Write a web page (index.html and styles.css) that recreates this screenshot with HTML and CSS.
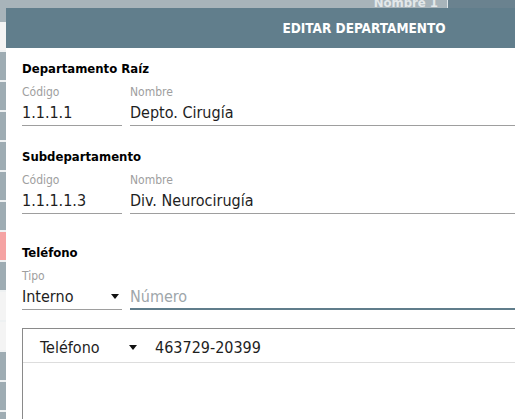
FILE: index.html
```html
<!DOCTYPE html>
<html lang="es">
<head>
<meta charset="utf-8">
<title>Editar departamento</title>
<link rel="stylesheet" href="styles.css">
</head>
<body>
<div class="page">
  <div class="grid-head">
    <div class="th th-main"><span>Nombre 1</span></div>
    <div class="th th-active"></div>
  </div>
  <div class="grid-body">
    <div class="gr gr-light"></div>
    <div class="gr"></div>
    <div class="gr"></div>
    <div class="gr"></div>
    <div class="gr"></div>
    <div class="gr"></div>
    <div class="gr"></div>
    <div class="gr gr-pink"></div>
    <div class="gr"></div>
    <div class="gr gr-light"></div>
    <div class="gr gr-light"></div>
    <div class="gr"></div>
    <div class="gr"></div>
    <div class="gr"></div>
  </div>
</div>

<div class="dialog">
  <div class="dlg-head">EDITAR DEPARTAMENTO</div>
  <div class="dlg-body">
    <section class="group">
      <h3 class="group-title">Departamento Raíz</h3>
      <div class="fields">
        <div class="field f-code">
          <div class="label">Código</div>
          <div class="value">1.1.1.1</div>
        </div>
        <div class="field f-name">
          <div class="label">Nombre</div>
          <div class="value">Depto. Cirugía</div>
        </div>
      </div>
    </section>

    <section class="group">
      <h3 class="group-title">Subdepartamento</h3>
      <div class="fields">
        <div class="field f-code">
          <div class="label">Código</div>
          <div class="value">1.1.1.1.3</div>
        </div>
        <div class="field f-name">
          <div class="label">Nombre</div>
          <div class="value">Div. Neurocirugía</div>
        </div>
      </div>
    </section>

    <section class="group group-phone">
      <h3 class="group-title">Teléfono</h3>
      <div class="fields">
        <div class="field f-code">
          <div class="label">Tipo</div>
          <div class="value select"><span>Interno</span><span class="caret"></span></div>
        </div>
        <div class="field f-name f-focus">
          <div class="label">&nbsp;</div>
          <div class="value placeholder">Número</div>
        </div>
      </div>
    </section>

    <div class="list">
      <div class="list-row">
        <div class="row-select"><span>Teléfono</span><span class="caret"></span></div>
        <div class="row-num">463729-20399</div>
      </div>
    </div>
  </div>
</div>
</body>
</html>
```

FILE: styles.css
```css
* { box-sizing: border-box; }

html, body {
  margin: 0;
  padding: 0;
  width: 515px;
  height: 419px;
  overflow: hidden;
}

body {
  font-family: "DejaVu Sans Condensed", "DejaVu Sans", sans-serif;
  font-stretch: condensed;
  background: #f3f4f4;
  position: relative;
}

/* background grid (dimmed by the modal) */
.page {
  display: flex;
  flex-direction: column;
}

.grid-head {
  display: flex;
  height: 22px;
}

.th {
  height: 22px;
}

.th-main {
  width: 448px;
  background: #a8b4ba;
  border-right: 1px solid #dfe5e8;
  text-align: right;
  padding-right: 9px;
  font-weight: bold;
  font-size: 13px;
  line-height: 5px;
  color: #e3e8ea;
}

.th-active {
  flex: 1;
  background: #6a828f;
}

.grid-body {
  display: flex;
  flex-direction: column;
  width: 448px;
}

.gr {
  height: 30px;
  background: #9eacb3;
  border-bottom: 2px solid #eef1f2;
}

.gr-light { background: #f4f4f4; }
.gr-pink { background: #f5a3a3; }

/* modal dialog */
.dialog {
  position: absolute;
  left: 6px;
  top: 8px;
  width: 716px;
  height: 460px;
  background: #ffffff;
}

.dlg-head {
  height: 40px;
  background: #617e8c;
  color: #ffffff;
  font-weight: bold;
  font-size: 13.5px;
  line-height: 40px;
  text-align: center;
}

.dlg-body {
  padding: 13px 0 0 16px;
  display: flex;
  flex-direction: column;
}

.group + .group { margin-top: 23px; }
.group-phone { margin-top: 31px !important; }

.group-title {
  margin: 0 0 8px;
  font-size: 13px;
  line-height: 16px;
  font-weight: bold;
  color: #000;
}

.fields {
  display: flex;
  gap: 8px;
}

.field {
  display: flex;
  flex-direction: column;
  border-bottom: 1px solid #9e9e9e;
  padding-bottom: 2px;
}

.f-code { width: 100px; }
.f-name { flex: 1; }

.f-focus {
  border-bottom: 2px solid #607d8b;
  padding-bottom: 1px;
}

.label {
  font-size: 12px;
  line-height: 14px;
  color: #9e9e9e;
}

.value {
  margin-top: 4px;
  font-size: 16px;
  line-height: 20px;
  color: #1e1e1e;
}

.placeholder { color: #9ea6aa; }

.select {
  display: flex;
  align-items: center;
  justify-content: space-between;
  padding-right: 3px;
}

.caret {
  width: 0;
  height: 0;
  border-left: 4.5px solid transparent;
  border-right: 4.5px solid transparent;
  border-top: 5px solid #111;
  margin-bottom: 2px;
}

.list {
  margin-top: 18px;
  border: 1px solid #8a8a8a;
  height: 200px;
}

.list-row {
  display: flex;
  align-items: center;
  gap: 17px;
  padding: 9px 17px 4px;
  border-bottom: 1px solid #dddddd;
  font-size: 16px;
  line-height: 20px;
  color: #1e1e1e;
}

.row-select {
  width: 98px;
  display: flex;
  align-items: center;
  justify-content: space-between;
  padding-right: 1px;
}
```
